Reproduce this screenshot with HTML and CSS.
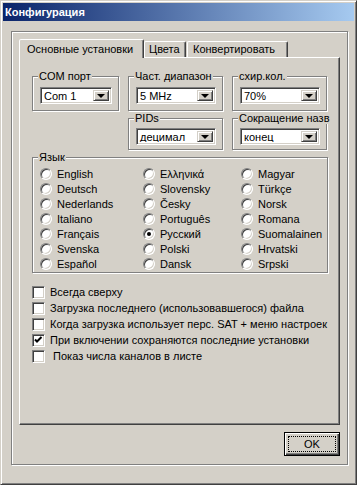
FILE: index.html
```html
<!DOCTYPE html>
<html lang="ru">
<head>
  <meta charset="UTF-8" />
  <title>Конфигурация</title>
  <link rel="stylesheet" href="styles.css">
</head>
<body>

  <div class="window">
    <div class="titlebar">Конфигурация</div>

    <div class="frame">
      <div class="tabs">
        <div class="tab active">Основные установки</div>
        <div class="tab colors">Цвета</div>
        <div class="tab convert">Конвертировать</div>
      </div>

      <div class="panel">
        <div class="boxes">
          <fieldset class="group">
            <legend>COM порт</legend>
            <div class="combo"><span>Com 1</span><i class="drop"></i></div>
          </fieldset>
          <fieldset class="group">
            <legend>Част. диапазон</legend>
            <div class="combo"><span>5 MHz</span><i class="drop"></i></div>
          </fieldset>
          <fieldset class="group">
            <legend>схир.кол.</legend>
            <div class="combo"><span>70%</span><i class="drop"></i></div>
          </fieldset>
          <fieldset class="group low col2">
            <legend>PIDs</legend>
            <div class="combo"><span>децимал</span><i class="drop"></i></div>
          </fieldset>
          <fieldset class="group low col3">
            <legend>Сокращение назв</legend>
            <div class="combo"><span>конец</span><i class="drop"></i></div>
          </fieldset>
        </div>

        <fieldset class="group lang">
          <legend>Язык</legend>
          <div class="radios">
            <label class="radio"><i></i>English</label>
            <label class="radio"><i></i>Ελληνικά</label>
            <label class="radio"><i></i>Magyar</label>
            <label class="radio"><i></i>Deutsch</label>
            <label class="radio"><i></i>Slovensky</label>
            <label class="radio"><i></i>Türkçe</label>
            <label class="radio"><i></i>Nederlands</label>
            <label class="radio"><i></i>Česky</label>
            <label class="radio"><i></i>Norsk</label>
            <label class="radio"><i></i>Italiano</label>
            <label class="radio"><i></i>Português</label>
            <label class="radio"><i></i>Romana</label>
            <label class="radio"><i></i>Français</label>
            <label class="radio"><i class="on"></i>Русский</label>
            <label class="radio"><i></i>Suomalainen</label>
            <label class="radio"><i></i>Svenska</label>
            <label class="radio"><i></i>Polski</label>
            <label class="radio"><i></i>Hrvatski</label>
            <label class="radio"><i></i>Español</label>
            <label class="radio"><i></i>Dansk</label>
            <label class="radio"><i></i>Srpski</label>
          </div>
        </fieldset>

        <div class="checks">
          <label class="check"><i></i>Всегда сверху</label>
          <label class="check"><i></i>Загрузка последнего (использовавшегося) файла</label>
          <label class="check"><i></i>Когда загрузка использует перс. SAT + меню настроек</label>
          <label class="check"><i><svg width="11" height="11" viewBox="0 0 11 11"><polyline points="2,4.5 4,6.5 8.5,2" fill="none" stroke="#000" stroke-width="2"/></svg></i>При включении сохраняются последние установки</label>
          <label class="check"><i></i>&nbsp;Показ числа каналов в листе</label>
        </div>
      </div>

      <div class="buttons">
        <button class="ok"><span>OK</span></button>
      </div>
    </div>
  </div>

</body>
</html>
```

FILE: styles.css
```css
body {
  margin: 0;
  background: #d4d0c8;
  font-family: "Liberation Sans", Arial, sans-serif;
  font-size: 11px;
  color: #000;
}

/* window chrome */
.window {
  width: 357px;
  height: 485px;
  box-sizing: border-box;
  border: 1px solid;
  border-color: #d4d0c8 #404040 #404040 #d4d0c8;
  box-shadow: inset 1px 1px #fff, inset -1px -1px #808080;
  padding: 2px;
}

.titlebar {
  height: 18px;
  line-height: 18px;
  padding-left: 2px;
  background: linear-gradient(to right, #0a246a, #a6caf0);
  color: #fff;
  font-weight: bold;
}

.frame {
  height: 434px;
  box-sizing: border-box;
  margin: 10px 6px 0 8px;
  border: 1px solid #808080;
  box-shadow: inset 1px 1px #fff, 1px 1px #fff;
  padding: 7px 7px 0 7px;
}

/* tabs */
.tabs {
  display: flex;
  align-items: flex-end;
  height: 18px;
}

.tab {
  height: 16px;
  line-height: 15px;
  box-sizing: border-box;
  border: 1px solid;
  border-bottom: none;
  border-color: #fff #404040 transparent #fff;
  box-shadow: inset -1px 0 #808080;
  border-radius: 2px 2px 0 0;
  white-space: nowrap;
  overflow: hidden;
}

.tab.active {
  width: 125px;
  height: 19px;
  line-height: 19px;
  margin-bottom: -1px;
  padding-left: 7px;
  position: relative;
  z-index: 1;
  background: #d4d0c8;
}

.tab.colors {
  width: 42px;
  padding-left: 4px;
}

.tab.convert {
  width: 101px;
  margin-left: 1px;
  padding-left: 5px;
}

.panel {
  height: 368px;
  box-sizing: border-box;
  border: 1px solid;
  border-color: #fff #404040 #404040 #fff;
  box-shadow: inset -1px -1px #808080;
  padding: 12px 11px 0 12px;
}

/* group boxes */
.boxes {
  display: grid;
  grid-template-columns: 87px 95px 95px;
  column-gap: 9px;
  row-gap: 1px;
}

.col2 { grid-column: 2; }
.col3 { grid-column: 3; }

.group {
  margin: 0;
  min-width: 0;
  border: 1px solid #808080;
  box-shadow: inset 1px 1px #fff, 1px 1px #fff;
  padding: 5px 6px 6px 7px;
}

.group.low {
  padding-top: 4px;
  padding-bottom: 4px;
}

.group legend {
  margin-left: -2px;
  padding: 0 1px;
  line-height: 12px;
  background: #d4d0c8;
  white-space: nowrap;
}

.combo {
  display: flex;
  height: 17px;
  box-sizing: border-box;
  background: #fff;
  border: 1px solid;
  border-color: #808080 #fff #fff #808080;
  box-shadow: inset 1px 1px #404040, inset -1px -1px #d4d0c8;
  padding: 2px;
}

.combo span {
  flex: 1;
  padding-left: 1px;
  line-height: 13px;
  white-space: nowrap;
  overflow: hidden;
}

.drop {
  width: 16px;
  box-sizing: border-box;
  background: #d4d0c8;
  border: 1px solid;
  border-color: #d4d0c8 #404040 #404040 #d4d0c8;
  box-shadow: inset 1px 1px #fff, inset -1px -1px #808080;
  display: flex;
  align-items: center;
  justify-content: center;
}

.drop::after {
  content: '';
  border-style: solid;
  border-width: 4px 4px 0;
  border-color: #000 transparent transparent;
}

/* language radios */
.lang {
  margin-top: 1px;
  padding: 3px 0 1px 7px;
}

.radios {
  display: grid;
  grid-template-columns: 103px 98px 1fr;
  grid-auto-rows: 15px;
}

.radio,
.check {
  display: flex;
  align-items: center;
  gap: 5px;
  white-space: nowrap;
}

.radio i,
.check i {
  flex: none;
  box-sizing: border-box;
  background: #fff;
  border: 1px solid;
  border-color: #808080 #fff #fff #808080;
  box-shadow: inset 1px 1px #404040, inset -1px -1px #d4d0c8;
  display: flex;
  align-items: center;
  justify-content: center;
}

.radio i {
  width: 12px;
  height: 12px;
  border-radius: 50%;
}

.radio i.on::after {
  content: '';
  width: 4px;
  height: 4px;
  border-radius: 50%;
  background: #000;
}

/* checkboxes */
.checks {
  margin-top: 11px;
}

.check {
  height: 16px;
  overflow: hidden;
}

.check i {
  width: 13px;
  height: 13px;
}

/* OK button */
.buttons {
  display: flex;
  justify-content: flex-end;
  margin-top: 7px;
}

.ok {
  width: 56px;
  height: 24px;
  box-sizing: border-box;
  border: 1px solid #000;
  background: #d4d0c8;
  box-shadow: inset 1px 1px #fff, inset -1px -1px #404040, inset -2px -2px #808080;
  font: inherit;
  color: #000;
  padding: 3px;
}

.ok span {
  display: flex;
  align-items: center;
  justify-content: center;
  height: 100%;
  box-sizing: border-box;
  border: 1px dotted #000;
}
```
